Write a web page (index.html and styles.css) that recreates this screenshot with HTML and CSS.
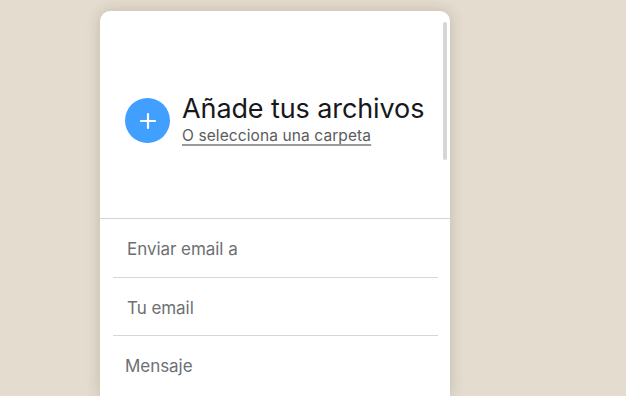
FILE: index.html
```html
<!DOCTYPE html>
<html>
<head>
    <title>Enviar archivos</title>
    <link rel="stylesheet" href="styles.css">
</head>
<body>
    <div class="transfer-card">
        <div class="uploader">
            <div class="add-button">
                <svg width="20" height="20" viewBox="0 0 20 20">
                    <path d="M10 3v14M3 10h14" stroke="#fff" stroke-width="2.2" stroke-linecap="round"/>
                </svg>
            </div>
            <div class="uploader-text">
                <h2>Añade tus archivos</h2>
                <a href="#" class="folder-link">O selecciona una carpeta</a>
            </div>
            <div class="scrollbar"></div>
        </div>

        <div class="fields">
            <div class="field">Enviar email a</div>
            <div class="field">Tu email</div>
            <div class="field field-message">Mensaje</div>
        </div>
    </div>
</body>
</html>
```

FILE: styles.css
```css
body {
    margin: 0;
    background: #e3dccf;
    font-family: Inter, "Noto Sans", sans-serif;
    overflow: hidden;
}
.transfer-card {
    width: 350px;
    margin: 11px 0 0 100px;
    background: #fff;
    border-radius: 10px 10px 0 0;
    box-shadow: 0 0 14px rgba(80, 60, 30, 0.22);
    height: 385px;
}
.uploader {
    position: relative;
    height: 208px;
    display: flex;
    align-items: center;
    padding-left: 25px;
    padding-top: 12px;
    box-sizing: border-box;
    border-bottom: 1px solid #d4d4d4;
}
.add-button {
    width: 45px;
    height: 45px;
    border-radius: 50%;
    background: #409fff;
    display: flex;
    align-items: center;
    justify-content: center;
    flex-shrink: 0;
}
.uploader-text {
    margin-left: 12px;
    margin-top: -4px;
}
.uploader-text h2 {
    margin: 0;
    font-size: 27px;
    font-weight: 400;
    color: #17181a;
    line-height: 32px;
    letter-spacing: -0.1px;
}
.folder-link {
    font-size: 15.5px;
    color: #5a5b5c;
    text-decoration: underline;
    text-decoration-color: #9a9a9a;
    text-decoration-thickness: 2px;
    text-decoration-skip-ink: none;
    text-underline-offset: 3px;
    letter-spacing: 0.1px;
}
.scrollbar {
    position: absolute;
    top: 11px;
    right: 3px;
    width: 4px;
    height: 138px;
    border-radius: 2px;
    background: #d6d6d6;
}
.fields {
    padding: 0 12px 0 13px;
}
.field {
    height: 58px;
    line-height: 60px;
    padding-left: 14px;
    font-size: 17px;
    color: #6d7073;
    letter-spacing: -0.05px;
    border-bottom: 1px solid #d6d6d6;
}
.field + .field {
    height: 57px;
}
.field-message {
    padding-left: 12px;
    border-bottom: none;
}
```
